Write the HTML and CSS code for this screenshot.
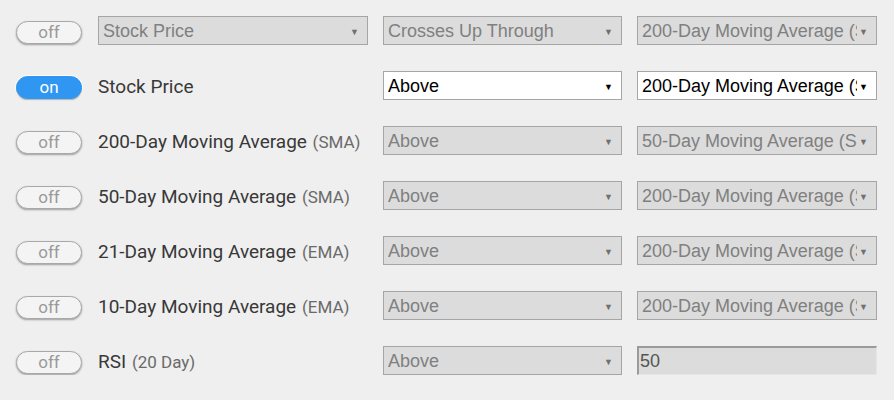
FILE: index.html
```html
<!DOCTYPE html>
<html>
<head>
<meta charset="utf-8">
<link rel="stylesheet" href="styles.css">
</head>
<body>
<div class="list">
  <div class="row">
    <div class="toggle">off</div>
    <div class="sel dis wide"><span class="txt">Stock Price</span><span class="arr">▼</span></div>
    <div class="sel dis"><span class="txt">Crosses Up Through</span><span class="arr">▼</span></div>
    <div class="sel dis"><span class="txt">200-Day Moving Average (SMA)</span><span class="arr">▼</span></div>
  </div>
  <div class="row">
    <div class="toggle on">on</div>
    <div class="label">Stock Price</div>
    <div class="sel"><span class="txt">Above</span><span class="arr">▼</span></div>
    <div class="sel"><span class="txt">200-Day Moving Average (SMA)</span><span class="arr">▼</span></div>
  </div>
  <div class="row">
    <div class="toggle">off</div>
    <div class="label">200-Day Moving Average <span class="sub">(SMA)</span></div>
    <div class="sel dis"><span class="txt">Above</span><span class="arr">▼</span></div>
    <div class="sel dis"><span class="txt">50-Day Moving Average (SMA)</span><span class="arr">▼</span></div>
  </div>
  <div class="row">
    <div class="toggle">off</div>
    <div class="label">50-Day Moving Average <span class="sub">(SMA)</span></div>
    <div class="sel dis"><span class="txt">Above</span><span class="arr">▼</span></div>
    <div class="sel dis"><span class="txt">200-Day Moving Average (SMA)</span><span class="arr">▼</span></div>
  </div>
  <div class="row">
    <div class="toggle">off</div>
    <div class="label">21-Day Moving Average <span class="sub">(EMA)</span></div>
    <div class="sel dis"><span class="txt">Above</span><span class="arr">▼</span></div>
    <div class="sel dis"><span class="txt">200-Day Moving Average (SMA)</span><span class="arr">▼</span></div>
  </div>
  <div class="row">
    <div class="toggle">off</div>
    <div class="label">10-Day Moving Average <span class="sub">(EMA)</span></div>
    <div class="sel dis"><span class="txt">Above</span><span class="arr">▼</span></div>
    <div class="sel dis"><span class="txt">200-Day Moving Average (SMA)</span><span class="arr">▼</span></div>
  </div>
  <div class="row">
    <div class="toggle">off</div>
    <div class="label">RSI <span class="sub">(20 Day)</span></div>
    <div class="sel dis"><span class="txt">Above</span><span class="arr">▼</span></div>
    <div class="inp">50</div>
  </div>
</div>
</body>
</html>
```

FILE: styles.css
```css
html, body {
  margin: 0;
  padding: 0;
  background: #efefef;
}
.list {
  padding: 16px 0 0 16px;
  display: flex;
  flex-direction: column;
  gap: 26px;
}
.row {
  display: grid;
  grid-template-columns: 67px 270px 239px 240px;
  column-gap: 15px;
  height: 29px;
  align-items: center;
}
.toggle {
  box-sizing: border-box;
  width: 66px;
  height: 23px;
  margin-top: 3px;
  border: 1px solid #a8a8a8;
  border-radius: 12px;
  box-shadow: 0 1px 2px rgba(0,0,0,0.35);
  background: #f4f4f4;
  color: #9a9a9a;
  font-family: Roboto, "Noto Sans", sans-serif;
  font-size: 17px;
  line-height: 20px;
  text-align: center;
}
.toggle.on {
  background: #2f97f1;
  border-color: #2f97f1;
  color: #ffffff;
  box-shadow: 0 1px 1px rgba(0,0,0,0.3), 0 0 0 1px #fff;
}
.label {
  font-family: Roboto, "Noto Sans", sans-serif;
  font-size: 19px;
  font-weight: 400;
  color: #383838;
  white-space: nowrap;
  padding-top: 1px;
}
.sub {
  font-size: 17px;
  color: #6a6a6a;
  margin-left: 1px;
}
.sel {
  box-sizing: border-box;
  height: 29px;
  display: flex;
  align-items: center;
  background: #fff;
  border: 1px solid #a5a5a5;
  font-family: "Liberation Sans", Arial, sans-serif;
  font-size: 18px;
  color: #000;
  padding: 2px 0 0 4px;
}
.sel .txt {
  flex: 1;
  overflow: hidden;
  white-space: nowrap;
}
.sel .arr {
  width: 17px;
  flex: none;
  font-size: 9px;
  text-align: left;
  padding-left: 2px;
  color: #000;
}
.sel.dis {
  background: #dcdcdc;
  color: #808080;
}
.sel.dis .arr { color: #707070; }
.inp {
  box-sizing: border-box;
  height: 29px;
  width: 240px;
  background: #dcdcdc;
  border-top: 2px solid #9a9a9a;
  border-left: 2px solid #9a9a9a;
  border-right: 1px solid #e6e6e6;
  border-bottom: 1px solid #e6e6e6;
  font-family: "Liberation Sans", Arial, sans-serif;
  font-size: 18px;
  color: #555;
  padding-left: 1px;
  line-height: 27px;
}
```
